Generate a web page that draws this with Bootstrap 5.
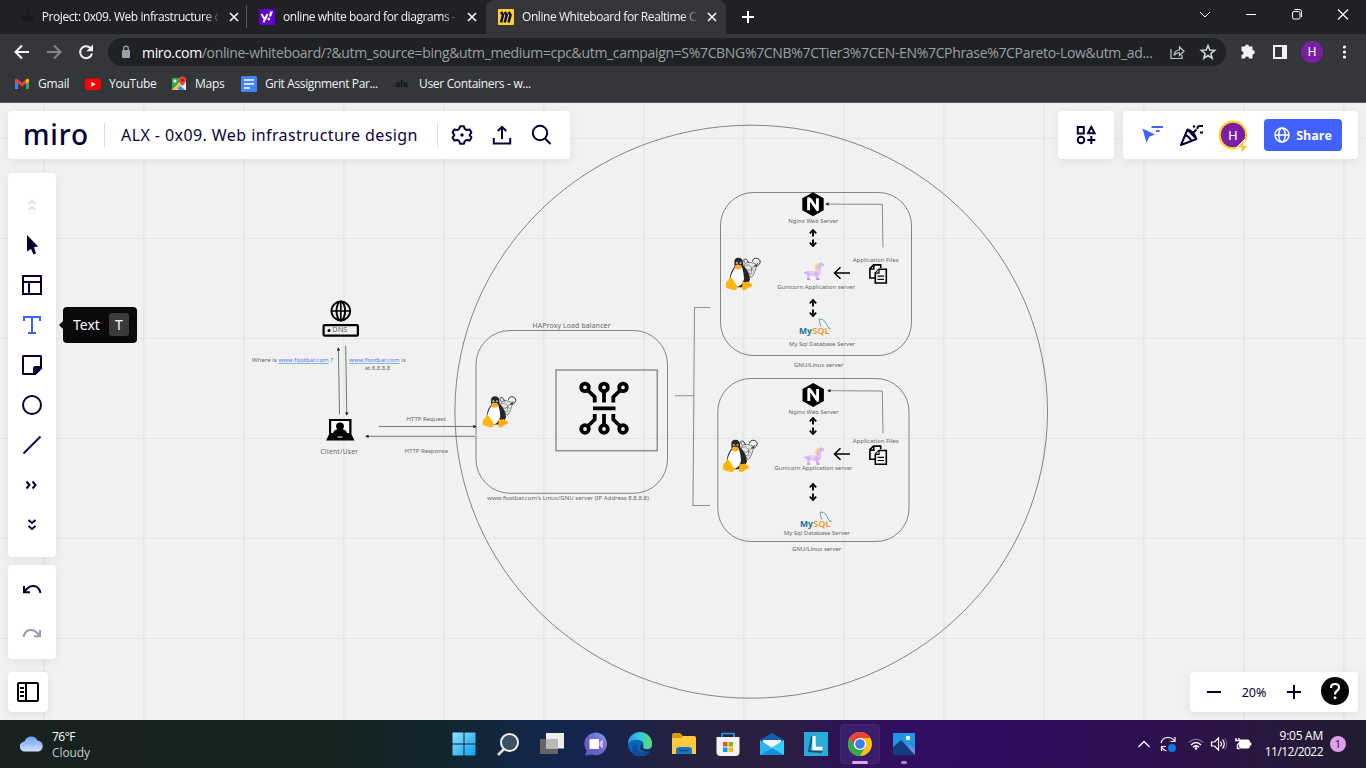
<!DOCTYPE html>
<html lang="en">
<head>
<meta charset="utf-8">
<meta name="viewport" content="width=device-width, initial-scale=1">
<title>Online Whiteboard for Realtime Collaboration</title>
<link href="https://cdn.jsdelivr.net/npm/bootstrap@5.3.0/dist/css/bootstrap.min.css" rel="stylesheet">
<style>
:root{--ink:#050038;--miro:#4262ff}
body{font-family:"Open Sans","Noto Sans",sans-serif;width:1366px;height:768px;overflow:hidden;background:#f1f1f1}
svg{display:block;flex:none}
.tabstrip{height:34px;background:#202124;padding-left:8px}
.btab{width:239px;padding:0 6px 0 12px;font-size:12px;letter-spacing:-.43px;color:#f1f3f4;height:34px;position:relative}
.btab .ttl{margin:0 8px;width:176px;-webkit-mask-image:linear-gradient(90deg,#000 92%,rgba(0,0,0,.2))}
.btab.on{background:#35363a;border-radius:8px 8px 0 0;width:240px;padding-right:8px}
.btab.line{border-right:1px solid transparent;border-image:linear-gradient(transparent 7px,#5a5b5f 7px,#5a5b5f 27px,transparent 27px) 1}
.wbtn{width:46px;height:28px}
.urlrow{height:36px;background:#35363a}
.nbtn{width:32px}
.omni{width:1118px;height:28px;border-radius:14px;background:#202124;font-size:14px;color:#9aa0a6;padding:0 9px 0 10px}
.url{letter-spacing:-.33px}
.marks{height:33px;background:#35363a;border-bottom:1px solid #5b5c60;font-size:12px;letter-spacing:-.25px;color:#f1f3f4;padding:0 14px 5px}
.alx{font:800 9px "Noto Sans",sans-serif;color:#16171a;width:16px;letter-spacing:-.3px}
.board{height:617px;background:#f1f1f1}
.panel{background:#fff;border-radius:4px;box-shadow:0 2px 10px rgba(5,0,56,.07);color:var(--ink)}
.p-title{left:8px;top:8px;width:562px;height:48px}
.p-apps{left:1058px;top:8px;width:56px;height:48px}
.p-share{left:1123px;top:8px;width:235px;height:48px}
.p-tools{left:8px;top:70px;width:48px;height:384px;padding:12px 0}
.p-undo{left:8px;top:462px;width:48px;height:94px;padding:3px 0}
.p-frames{left:8px;top:569px;width:40px;height:40px}
.p-zoom{left:1190px;top:569px;width:168px;height:40px}
.vline{width:1px;height:24px;background:#dcdce2}
.tool{width:40px;height:40px}
.bname{font:400 16px "Noto Sans",sans-serif;letter-spacing:.42px;width:300px;color:#0b0640}
.btn-go{width:78px;height:32px;background:var(--miro);color:#fff;font:700 12.5px "Open Sans",sans-serif;border-radius:4px;border:0}
.btn-go:hover{background:#2b4bee;color:#fff}
.tip{left:63px;top:204px;width:74px;height:36px;background:#0a0a0a;border-radius:4px;color:#fff;font:14px "Noto Sans",sans-serif}
.tip::before{content:"";position:absolute;left:-4px;top:13px;border:5px solid transparent;border-right-color:#0a0a0a;border-left:0}
.keycap{width:20px;height:23px;background:#3b3b3b;border-radius:3px}
.taskbar{height:48px;background:linear-gradient(90deg,#182220 0,#15221f 24%,#12262d 32%,#13264b 40%,#15234e 43%,#25213f 50%,#2b1f41 57%,#2c1552 61%,#310e63 66%,#2f0c5e 74%,#2e0f50 84%,#291740 92%,#211c2e);color:#fff;font-size:12px;line-height:16px}
.task{width:44px;height:48px;position:relative}
.task.cur::before{content:"";position:absolute;inset:4px 2px;border:1px solid #44266f;background:#3b1e69;border-radius:4px}
.task svg{position:relative}
.runbar{left:14px;bottom:4px;width:16px;height:3px;border-radius:2px;background:#dfa5ec}
.rundot{left:19px;bottom:4px;width:6px;height:3px;border-radius:2px;background:#a78dbd}
.weather{width:442px;padding-left:20px}
.clock{width:60px;letter-spacing:-.55px;white-space:nowrap}
.diagram text{font-family:"Noto Sans",sans-serif;fill:#686868}
</style>
</head>
<body class="d-flex flex-column m-0">
<header>
  <div class="tabstrip d-flex">
    <div class="btab line d-flex align-items-center"><span class="alx" style="margin-left:1px">alx</span><span class="ttl text-nowrap flex-fill">Project: 0x09. Web infrastructure d</span>
      <svg width="16" height="16" viewBox="0 0 16 16"><path d="M4 4l8 8M12 4l-8 8" stroke="#f1f3f4" stroke-width="1.7"/></svg></div>
    <div class="btab d-flex align-items-center"><svg width="16" height="16" viewBox="0 0 16 16"><rect width="16" height="16" fill="#6001d2"/><path d="M2.500 5l3 5M8.500 5l-4 8.300" stroke="#fff" stroke-width="2"/><path d="M11 2.500h3l-2 5h-2z" fill="#fff"/><circle cx="9.800" cy="10" r="1.400" fill="#fff"/></svg><span class="ttl text-nowrap flex-fill">online white board for diagrams -</span>
      <svg width="16" height="16" viewBox="0 0 16 16"><path d="M4 4l8 8M12 4l-8 8" stroke="#f1f3f4" stroke-width="1.7"/></svg></div>
    <div class="btab on d-flex align-items-center"><svg width="16" height="16" viewBox="0 0 16 16"><rect width="16" height="16" rx="1" fill="#ffd02f"/><path d="M3 3l2 3-2 7.500M6.700 3l2 3-2 7.500M10.500 3l2 3-2 7.500" fill="none" stroke="#12104a" stroke-width="2.600"/></svg><span class="ttl text-nowrap flex-fill">Online Whiteboard for Realtime C</span>
      <svg width="16" height="16" viewBox="0 0 16 16"><path d="M4 4l8 8M12 4l-8 8" stroke="#f1f3f4" stroke-width="1.7"/></svg></div>
    <svg width="44" height="34" viewBox="0 0 44 34"><path d="M22 11v12M16 17h12" stroke="#fff" stroke-width="2"/></svg>
    <div class="d-flex ms-auto">
      <svg class="wbtn" viewBox="0 0 46 28"><path d="M18 12l5 5 5-5" fill="none" stroke="#fff"/></svg>
      <svg class="wbtn" viewBox="0 0 46 28"><path d="M18 14.500h10" stroke="#fff"/></svg>
      <svg class="wbtn" viewBox="0 0 46 28"><rect x="18.500" y="11.500" width="7.500" height="7.500" rx="1.500" fill="none" stroke="#fff"/><path d="M20.500 9.500h5q2 0 2 2v5.500" fill="none" stroke="#fff"/></svg>
      <svg class="wbtn" viewBox="0 0 46 28"><path d="M18 9.500l10 10M28 9.500l-10 10" stroke="#fff" stroke-width="1.100"/></svg>
    </div>
  </div>
  <div class="urlrow d-flex align-items-center">
    <div class="d-flex" style="padding:0 6px">
      <svg class="nbtn" height="24" viewBox="0 0 32 24"><path d="M23 12H10M16 5.500L9.500 12l6.500 6.500" fill="none" stroke="#f1f3f4" stroke-width="2"/></svg>
      <svg class="nbtn" height="24" viewBox="0 0 32 24"><path d="M9 12h13M16 5.500l6.500 6.500-6.500 6.500" fill="none" stroke="#85868a" stroke-width="2"/></svg>
      <svg class="nbtn" height="24" viewBox="0 0 32 24"><path d="M20.500 8A6 6 0 1 0 22 13.500" fill="none" stroke="#f1f3f4" stroke-width="2"/><path d="M23 4.500v6.700h-6.700z" fill="#f1f3f4"/></svg>
    </div>
    <div class="omni d-flex align-items-center">
      <svg class="me-2" width="16" height="16" viewBox="0 0 16 16"><rect x="4" y="6" width="8" height="8" rx="1" fill="#9aa0a6"/><path d="M5.700 7V4.500a2.300 2.300 0 0 1 4.600 0V7" fill="none" stroke="#9aa0a6" stroke-width="1.300"/></svg>
      <span class="text-nowrap url"><span class="text-white">miro.com</span>/online-whiteboard/?&amp;utm_source=bing&amp;utm_medium=cpc&amp;utm_campaign=S%7CBNG%7CNB%7CTier3%7CEN-EN%7CPhrase%7CPareto-Low&amp;utm_ad...</span>
      <svg class="ms-auto" width="18" height="18" viewBox="0 0 18 18"><path d="M3 6v9.500h11V12M6 12.500q.5-5.500 5.500-5.500V4l4.500 4.300-4.500 4.200V10Q8 9.500 6 12.500z" fill="none" stroke="#c3c6ca" stroke-width="1.200"/></svg>
      <svg width="18" height="18" viewBox="0 0 18 18" style="margin-left:13px"><path d="M9 2.500l1.800 4.500 4.900.3-3.800 3.100 1.300 4.800L9 12.500l-4.200 2.700 1.300-4.800-3.800-3.100 4.900-.3z" fill="none" stroke="#d3d6d9" stroke-width="1.500"/></svg>
    </div>
    <div class="d-flex align-items-center" style="padding-left:6px">
      <svg class="nbtn" height="24" viewBox="0 0 32 24"><path d="M9.500 6.500H13a2 2 0 1 1 4 0h3.500V10a2.200 2.200 0 1 1 0 4.500v4H17a2 2 0 0 0-4 0H9.500V15a2 2 0 1 0 0-4z" fill="#f1f3f4"/></svg>
      <svg class="nbtn" height="24" viewBox="0 0 32 24"><path fill-rule="evenodd" d="M9 5h14v14H9zM11 7v10h7V7z" fill="#f1f3f4"/></svg>
      <svg class="nbtn" height="24" viewBox="0 0 32 24"><circle cx="16" cy="12" r="11" fill="#7b1fa2"/><text x="16" y="16.300" text-anchor="middle" font-size="12" fill="#fff" font-family="Roboto">H</text></svg>
      <svg class="nbtn" height="24" viewBox="0 0 32 24"><circle cx="16.500" cy="7" r="1.600" fill="#fff"/><circle cx="16.500" cy="12" r="1.600" fill="#fff"/><circle cx="16.500" cy="17" r="1.600" fill="#fff"/></svg>
    </div>
  </div>
  <div class="marks d-flex align-items-center text-nowrap">
    <div class="d-flex align-items-center gap-2" style="width:71px"><svg width="16" height="16" viewBox="0 0 16 16"><path d="M1 3v10h3V6z" fill="#4285f4"/><path d="M15 3v10h-3V6z" fill="#34a853"/><path d="M1 3.500Q2.500 2 4 3.500L8 6.700l4-3.200v4L8 10.500 4 7.500 1 5.500z" fill="#ea4335"/><path d="M12 3.500q1.500-1.500 3 0v2l-3 2.300z" fill="#fbbc04"/></svg>Gmail</div>
    <div class="d-flex align-items-center gap-2" style="width:86px"><svg width="16" height="16" viewBox="0 0 16 16"><rect y="2.500" width="16" height="11.500" rx="3" fill="#f00"/><path d="M6.300 5.800v5L10.700 8.300z" fill="#fff"/></svg>YouTube</div>
    <div class="d-flex align-items-center gap-2" style="width:70px"><svg width="16" height="16" viewBox="0 0 16 16"><path d="M1 2h12v12H1z" fill="#34a853"/><path d="M1 14L12 3l3 3v8z" fill="#e8eaed"/><path d="M7 8l7 6H8L4 11z" fill="#4285f4"/><path d="M1 14l8-8 2 2-6 6z" fill="#fbc02d"/><circle cx="4" cy="5" r="1.500" fill="#fff"/><path d="M8 4a3.500 3.500 0 0 1 7 0q0 2-3.500 6Q8 6 8 4z" fill="#ea4335"/><circle cx="11.500" cy="4" r="1.200" fill="#811411"/></svg>Maps</div>
    <div class="d-flex align-items-center gap-2" style="width:154px;letter-spacing:-.36px"><svg width="16" height="16" viewBox="0 0 16 16"><rect width="16" height="16" rx="1.500" fill="#4285f4"/><path d="M3 4h10M3 8h10M3 12h6" stroke="#fff" stroke-width="1.700"/></svg>Grit Assignment Par...</div>
    <div class="d-flex align-items-center gap-2" style="letter-spacing:-.32px"><span class="alx">alx</span>User Containers - w...</div>
  </div>
</header>

<main class="board position-relative overflow-hidden">
<svg class="diagram" width="1366" height="617" viewBox="0 103 1366 617">
  <defs>
    <pattern id="grid" x="43" y="38" width="100" height="100" patternUnits="userSpaceOnUse"><path d="M.75 0v100M0 .25h100" stroke="#e7e7e7" stroke-width="1.500"/></pattern>
    <marker id="tipe" viewBox="0 0 4 4" refX="3" refY="2" markerWidth="3.500" markerHeight="3.500" markerUnits="userSpaceOnUse" orient="auto-start-reverse"><path d="M0 0l4 2-4 2z" fill="#222"/></marker>
    <g id="tux">
      <path d="M19.500 6q4-2.500 8-.5 5 1 3 5l-2 6-2.500 3.500-2.500-2-2-5q-4-3-2-7z" fill="#e4e4e4" stroke="#555" stroke-width=".7"/>
      <path d="M19 5Q17 1.500 20 1.500q2 .5 3 4M27 4q.5-4 5-3 4 1.500 2 5.500-2 3-5 2 3-.5 3-3" fill="none" stroke="#333" stroke-width="1"/>
      <path d="M20 8q3-2 5 1t5-2M22 12q1.500 2 3 0t3 1M23 15.500q2 2 4 0M26 10v5" fill="none" stroke="#666" stroke-width=".7"/>
      <path d="M8.800 4.500Q9 .3 13 .3t4.500 4.500l.5 3.500q6 6 6.500 14l-4 7.500H8L4.500 20q0-5 4.500-11z" fill="#262628"/>
      <path d="M9.500 10q4 3.500 7-.5 1.800 6 2 12-2 8-8.700 8-5.500-3-5.100-8 .8-5 4.800-11.500z" fill="#fff"/>
      <ellipse cx="11.300" cy="5.500" rx="1.100" ry="1.300" fill="#aaa"/><ellipse cx="15" cy="5.500" rx="1.100" ry="1.300" fill="#999"/>
      <path d="M9 8.500q3.500-3 7.500 0-1 3.500-3.800 3.500T9 8.500z" fill="#fbb116"/>
      <path d="M4 19.500q3 1 5 5l3 5q0 2.500-3 3.300l-8-2.300q-1.500-1 0-6 .5-1.500 2-1.500z" fill="#ffb412"/>
      <path d="M17 23q1 3 5 1l4.500 3q1 1.500-3 3l-4 2.500q-3 1-3-1.500z" fill="#ffae10"/>
    </g>
    <g id="nginx"><path d="M0-12L10.700-6V6L0 12-10.700 6V-6z"/><path d="M-4.400 6V-5.500Q-3.500-5.500-3-5L4.400 5.500V-6" fill="none" stroke="#fff" stroke-width="2.900" stroke-linejoin="round"/></g>
    <g id="updown"><path d="M0-6.500v5M0 6.500v-5" stroke="#000" stroke-width="1.900"/><path d="M-3.200-4.600L0-8l3.200 3.400M-3.200 4.600L0 8l3.200-3.400" fill="none" stroke="#000" stroke-width="1.800"/></g>
    <g id="uni"><path d="M.5 10.500l5.500-1.500h8.500l.8-6L19 .3l3 2v2l-3 .2-.5 7-2.300 2.500.5 3.700h-2.500l-.8-4-5-.5-1.500 1.800.5 2.700H5l.3-4L3.500 11.500z" fill="#d8b5f2"/><path d="M6 9l4.500 4.500 3.500-4.500zM18 4.500l-3 5.500 3 1.500z" fill="#e6cdf8"/><path d="M14.500 16.500h3v1.500h-3zM5 16.500h3V18H5z" fill="#bf8ce3"/><path d="M16.500 1l-3 1.800-.8 3.400 1.600 1.800 1.700-3.500z" fill="#f7d96b"/></g>
    <g id="files" fill="#f5f5f5" stroke="#000" stroke-width="1.600"><path d="M6 14H.9V4.500L4.500.9h7.200V4M4.800 1v4H1"/><path d="M6.300 9L10 5.300h7.300V19H6.300z"/><path d="M10 5.500v3.700H6.500M8.500 12.200h6.500M8.500 15.300h6.500" stroke-width="1.200"/></g>
    <g id="arrow"><path d="M16.500 6.500H1M7 .7L1 6.500l6 5.800" fill="none" stroke="#000" stroke-width="1.500"/></g>
    <g id="mysql"><text x="0" y="15" font-size="8.500" textLength="13" lengthAdjust="spacingAndGlyphs" style="fill:#1a6f96;font-weight:700">My</text><text x="13.200" y="15" font-size="8.500" textLength="17.500" lengthAdjust="spacingAndGlyphs" style="fill:#ef9526;font-weight:600">SQL</text><path d="M22 8Q20 4 20.200.5 24 .2 26 3l2.500 5 2.800 2-2 .3" fill="none" stroke="#4c9ab3" stroke-width=".9"/></g>
  </defs>
  <rect y="103" width="1366" height="617" fill="url(#grid)"/>
  <g fill="none" stroke="#777" stroke-width=".9">
    <ellipse cx="751.200" cy="411.700" rx="296.300" ry="286.500"/>
    <rect x="476" y="330.500" width="191.500" height="162.800" rx="34"/>
    <rect x="720.500" y="192.500" width="191" height="163" rx="33"/>
    <rect x="717.800" y="378.500" width="191.200" height="163" rx="33"/>
    <rect x="556" y="370" width="101.200" height="80.700" stroke="#8b8b8b" stroke-width="1.400"/>
    <path d="M675 395.800h19.500M710 307.500h-15.500L693 506M693 505.500h17" stroke="#909090" stroke-width="1.100"/>
    <g stroke="#666"><path d="M339.500 414.500L338.400 348" marker-end="url(#tipe)"/><path d="M345.700 345.500L346.800 415" marker-end="url(#tipe)"/><path d="M379 426.500h97" marker-end="url(#tipe)"/><path d="M475 436.300H366" marker-end="url(#tipe)"/></g>
    <path d="M883 247.500L882.300 204.300 826 204.100" marker-end="url(#tipe)" stroke="#808080"/><path d="M883 433.500L882.300 391 828 390.700" marker-end="url(#tipe)" stroke="#808080"/>
  </g>
  <g fill="none" stroke="#000" stroke-width="2">
    <circle cx="340.800" cy="311" r="9.400"/><ellipse cx="340.800" cy="311" rx="4.300" ry="9.400"/><path d="M331.500 311h18.600M340.800 302v18" stroke-width="1.700"/>
    <rect x="323.600" y="325.100" width="34.300" height="10.600" rx="1" stroke-width="2.200"/>
  </g>
  <circle cx="329" cy="330.600" r="1.500"/>
  <text x="332.300" y="332.300" font-size="6.500" textLength="15" lengthAdjust="spacingAndGlyphs">DNS</text>
  <path d="M329 419h22.500v15.500l3 6h-28.500l3-6z"/><path d="M331.200 421h18v12h-18z" fill="#fff"/><path d="M333 434q0-4 4-4.500l-1-3q0-4 4-4t4 4l-1 3q4 .5 4 4.500z"/><path d="M337.500 437h5" stroke="#fff"/>
  <g font-size="6">
    <text x="320.500" y="453.700" font-size="6.700" textLength="37.500">Client/User</text>
    <text x="252" y="362" textLength="81">Where is <tspan style="fill:#3f7fea;text-decoration:underline">www.footbar.com</tspan> ?</text>
    <text x="349.300" y="362" textLength="56.500"><tspan style="fill:#3f7fea;text-decoration:underline">www.footbar.com</tspan> is</text>
    <text x="364.700" y="370" textLength="25.500">at 8.8.8.8</text>
    <text x="406.600" y="421.200" textLength="39.300">HTTP Request</text>
    <text x="404.600" y="453.200" textLength="43.500">HTTP Response</text>
    <text x="532.500" y="327.800" font-size="6.900" textLength="78">HAProxy Load balancer</text>
    <text x="487.300" y="500.200" textLength="161.500">www.footbar.com's Linux/GNU server (IP Address 8.8.8.8)</text>
    <text x="788.300" y="223" textLength="50">Nginx Web Server</text>
    <text x="852.700" y="262" textLength="45.800">Application Files</text>
    <text x="777.200" y="289.200" textLength="78">Gunicorn Application server</text>
    <text x="789" y="346" textLength="66">My Sql Database Server</text>
    <text x="794" y="367" textLength="49.300">GNU/Linux server</text>
    <text x="788.500" y="414" textLength="50">Nginx Web Server</text>
    <text x="852.700" y="443.200" textLength="45.800">Application Files</text>
    <text x="774.500" y="470.200" textLength="78">Gunicorn Application server</text>
    <text x="783.800" y="535" textLength="66">My Sql Database Server</text>
    <text x="792" y="551" textLength="49.300">GNU/Linux server</text>
  </g>
  <g fill="none" stroke="#000" stroke-width="3.800">
    <circle cx="585" cy="387.400" r="3.800"/><circle cx="604" cy="387.400" r="3.800"/><circle cx="623" cy="387.400" r="3.800"/>
    <circle cx="585" cy="429" r="3.800"/><circle cx="604" cy="429" r="3.800"/><circle cx="623" cy="429" r="3.800"/>
    <path d="M604 391v11.500M604 425.500V414M588 390.500l6.700 6.500v5.500M620 390.500l-6.700 6.500v5.500M588 426l6.700-6.500V414M620 426l-6.700-6.500V414M593 408.300h22.500"/>
  </g>
  <use href="#tux" transform="translate(482.500 396) scale(.96)"/><use href="#tux" x="725.500" y="257.500"/><use href="#tux" x="722.500" y="439.500"/>
  <use href="#nginx" x="813" y="204.200"/><use href="#nginx" x="813.200" y="395"/>
  <use href="#updown" x="813" y="238"/><use href="#updown" x="813" y="308"/><use href="#updown" x="813" y="426"/><use href="#updown" x="813" y="492"/>
  <use href="#uni" x="802" y="262"/><use href="#uni" x="802.200" y="446.700"/>
  <use href="#arrow" x="833.500" y="266.500"/><use href="#arrow" x="833.500" y="447.500"/>
  <use href="#files" x="869" y="264"/><use href="#files" x="869" y="445.200"/>
  <use href="#mysql" x="799" y="318.500"/><use href="#mysql" x="800" y="511.500"/>
</svg>

<div class="panel p-title position-absolute d-flex align-items-center">
  <svg width="96" height="48" viewBox="8 111 96 48"><text x="23" y="145" font-family="Noto Sans" font-weight="500" font-size="28" fill="#050038" textLength="65" lengthAdjust="spacing">miro</text></svg>
  <span class="vline"></span>
  <span class="bname text-nowrap" style="margin:0 16px">ALX - 0x09. Web infrastructure design</span>
  <span class="vline"></span>
  <svg class="tool" style="margin-left:4px" viewBox="-20 -20 40 40"><path d="M-1.800-8.800h3.600l1 2.700 2 1.200 2.900-.5 1.700 3-1.900 2.400 1.900 2.400-1.700 3-2.900-.5-2 1.200-1 2.700h-3.600l-1-2.700-2-1.200-2.900.5-1.700-3L-7.500 0l-1.900-2.400 1.700-3 2.900.5 2-1.200z" fill="none" stroke="#050038" stroke-width="2" stroke-linejoin="round"/><circle r="1.700" fill="#050038"/></svg>
  <svg class="tool" viewBox="-20 -20 40 40"><path d="M-8.200 3v5.500H8.200V3M0 4V-8M-4.200-4L0-8.200 4.200-4" fill="none" stroke="#050038" stroke-width="2"/></svg>
  <svg class="tool" viewBox="-20 -20 40 40"><circle cx="-2" cy="-2" r="7.200" fill="none" stroke="#050038" stroke-width="2"/><path d="M3 3.500L8.500 9" stroke="#050038" stroke-width="2"/></svg>
</div>

<div class="panel p-apps position-absolute d-flex align-items-center justify-content-center">
  <svg class="tool" viewBox="-20 -20 40 40"><g fill="none" stroke="#050038" stroke-width="2"><rect x="-8.200" y="-8" width="6" height="6.500"/><circle cx="-5" cy="5" r="3.300"/><path d="M2 -1.800L5.300-8 8.600-1.800zM5.300 1v8M1.300 5h8"/></g></svg>
</div>

<div class="panel p-share position-absolute d-flex align-items-center">
  <svg class="tool" style="margin-left:10px" viewBox="-20 -20 40 40"><path d="M-10.500-6.500L2-.5-3.800 1.800-6.500 8z" fill="#4262ff"/><path d="M-1.500-8H10M3-4h3.500" stroke="#4262ff" stroke-width="1.800"/></svg>
  <svg class="tool" viewBox="-20 -20 40 40" style="margin-left:-1px"><g fill="none" stroke="#050038" stroke-width="2" stroke-linejoin="round"><path d="M-4.500-5.500L-11 10 4.500 4zM-4.500-5.500q6 1.500 9 9.500M-7 0q4 1 6.500 6M0-1L4.500-5.500M5.500-6q-.5-3 2.500-3h3M8-2.500h3"/></g><circle cx="2" cy="-8.500" r="1.200" fill="#050038"/></svg>
  <svg width="40" height="40" viewBox="-20 -20 40 40" style="margin-left:1px"><circle r="13.300" fill="#7b1fa2" stroke="#ffd02f" stroke-width="2.200"/><text y="4.500" text-anchor="middle" font-family="Roboto" font-size="13" fill="#fff">H</text><path d="M11.500 4.500L3.500 12.800h5L7 19.500l8.500-9h-5z" fill="#ffc52a" stroke="#fff" stroke-width="1"/></svg>
  <button class="btn-go btn p-0 d-flex align-items-center justify-content-center" style="margin-left:11px;gap:6px"><svg width="16" height="16" viewBox="-8 -8 16 16"><g fill="none" stroke="#fff" stroke-width="1.500"><circle r="7"/><ellipse rx="3.200" ry="7"/><path d="M-7 0H7"/></g></svg>Share</button>
</div>

<nav class="panel p-tools position-absolute d-flex flex-column align-items-center">
  <svg class="tool" viewBox="-20 -20 40 40"><path d="M-3.500-1L0-4l3.500 3M-3.500 5L0 2l3.500 3" fill="none" stroke="#e1e0e7" stroke-width="2"/></svg>
  <svg class="tool" viewBox="-20 -20 40 40"><path d="M-5-10L6.200 1.500 2 2.300 4 8.500 1.500 9.500-1 4-5 6.500z" fill="#050038"/></svg>
  <svg class="tool" viewBox="-20 -20 40 40"><path d="M-9-9H9V9H-9zM-9-3H9M-3-3V9" fill="none" stroke="#050038" stroke-width="2"/></svg>
  <svg class="tool" viewBox="-20 -20 40 40"><path d="M-8-4v-4H8v4M0-8V8M-4 8h8" fill="none" stroke="#4262ff" stroke-width="2"/></svg>
  <svg class="tool" viewBox="-20 -20 40 40"><path d="M-9-9H9V3L3 9H-9z" fill="none" stroke="#050038" stroke-width="2" stroke-linejoin="round"/><path d="M1 10V3.500Q1 1 3.500 1H10v2.500L3.500 10z" fill="#050038"/></svg>
  <svg class="tool" viewBox="-20 -20 40 40"><circle r="9" fill="none" stroke="#050038" stroke-width="2"/></svg>
  <svg class="tool" viewBox="-20 -20 40 40"><path d="M-8.500 8.500l17-17" stroke="#050038" stroke-width="2"/></svg>
  <svg class="tool" viewBox="-20 -20 40 40"><path d="M-5.500-3.500L-2.500 0l-3 3.500M.5-3.500L3.500 0 .5 3.500" fill="none" stroke="#050038" stroke-width="2"/></svg>
  <svg class="tool" viewBox="-20 -20 40 40"><path d="M-3.500-5L0-2l3.500-3M-3.500 1L0 4l3.500-3" fill="none" stroke="#050038" stroke-width="2"/></svg>
</nav>
<div class="tip position-absolute d-flex align-items-center justify-content-between" style="padding:0 8px 2px 10px">Text <span class="keycap d-flex align-items-center justify-content-center">T</span></div>

<div class="panel p-undo position-absolute d-flex flex-column align-items-center">
  <svg width="40" height="44" viewBox="-20 -22 40 44"><path d="M-7.500 1.500Q-3-4.500 2-4T8.500 3M-8-4v6.200H-2" fill="none" stroke="#050038" stroke-width="2"/></svg>
  <svg width="40" height="44" viewBox="-20 -22 40 44"><path d="M7.500 1.500Q3-4.500-2-4T-8.500 3M8-4v6.200H2" fill="none" stroke="#9b99af" stroke-width="2"/></svg>
</div>
<div class="panel p-frames position-absolute d-flex align-items-center justify-content-center">
  <svg width="24" height="24" viewBox="0 0 24 24"><g fill="none" stroke="#000" stroke-width="2"><rect x="2" y="3" width="20" height="18" rx="1"/><path d="M10 3v18M4 8h4M4 12h4M4 16h4"/></g></svg>
</div>
<div class="panel p-zoom position-absolute d-flex align-items-center">
  <svg class="tool" style="margin-left:4px" viewBox="-20 -20 40 40"><path d="M-7 0h14" stroke="#050038" stroke-width="2"/></svg>
  <span class="text-center" style="font:12.500px 'Noto Sans';width:40px">20%</span>
  <svg class="tool" viewBox="-20 -20 40 40"><path d="M-7 0H7M0-7V7" stroke="#050038" stroke-width="2"/></svg>
  <svg width="40" height="40" viewBox="-20 -20 40 40"><g transform="translate(1 -1)"><circle r="14" fill="#050505"/><path d="M-4-3q0-4 4-4t4 3.500q0 2-2 3.200T0 3.500" fill="none" stroke="#fff" stroke-width="2.200"/><circle cy="6.700" r="1.500" fill="#fff"/></g></svg>
</div>
</main>

<footer class="taskbar d-flex align-items-center">
  <div class="weather d-flex align-items-center gap-2">
    <svg width="24" height="24" viewBox="0 0 24 24"><defs><linearGradient id="cl" x2="0" y2="1"><stop stop-color="#6ba0f0"/><stop offset="1" stop-color="#d3e3fc"/></linearGradient></defs><path d="M5 19.500a5 5 0 0 1-.5-10 7 7 0 0 1 13-1 5.600 5.600 0 0 1 1 11z" fill="url(#cl)"/><path d="M3 14q5-6 10-1 4-4 9-1" fill="none" stroke="#8eb5f4" stroke-width="1.500" opacity=".6"/></svg>
    <div style="padding-top:1px"><span style="letter-spacing:-.5px">76°F</span><br><span style="color:#c4cac9;letter-spacing:-.1px">Cloudy</span></div>
  </div>
  <div class="task d-flex align-items-center justify-content-center"><svg width="24" height="24" viewBox="0 0 24 24"><defs><linearGradient id="wn" x2="1" y2="1"><stop stop-color="#8ce3fb"/><stop offset="1" stop-color="#109df0"/></linearGradient></defs><path d="M.5.500h11v11H.5zM12.500.500h11v11h-11zM.5 12.500h11v11H.5zM12.500 12.500h11v11h-11z" fill="url(#wn)"/></svg></div>
  <div class="task d-flex align-items-center justify-content-center"><svg width="24" height="24" viewBox="0 0 24 24"><path d="M8 17l-6 6" stroke="#ddd" stroke-width="2.500"/><circle cx="13.500" cy="10.500" r="8.500" fill="#3c4f63" stroke="#eee" stroke-width="2"/></svg></div>
  <div class="task d-flex align-items-center justify-content-center"><svg width="24" height="24" viewBox="0 0 24 24"><path d="M0 7h18v15H0z" fill="#656565"/><path d="M6 1h18v15.500H6z" fill="#ededed"/><path d="M6 7h12v9.500H6z" fill="#b8b8b8"/></svg></div>
  <div class="task d-flex align-items-center justify-content-center"><svg width="24" height="24" viewBox="0 0 24 24"><defs><linearGradient id="ct" x1="1" x2="0" y2="1"><stop stop-color="#7d9cf0"/><stop offset=".5" stop-color="#6b68cd"/><stop offset="1" stop-color="#5a55ba"/></linearGradient></defs><path d="M1 23.500l1.500-5A11.300 11.300 0 1 1 8 22.600z" fill="url(#ct)"/><rect x="5.500" y="7" width="9.500" height="10" rx="1" fill="#fff"/><path d="M15.500 10l3.500-2.500v9L15.500 14z" fill="#eaf"/></svg></div>
  <div class="task d-flex align-items-center justify-content-center"><svg width="24" height="24" viewBox="0 0 24 24"><defs><linearGradient id="ed" x2="1"><stop stop-color="#279be7"/><stop offset=".5" stop-color="#35c6dd"/><stop offset="1" stop-color="#63dc64"/></linearGradient></defs><circle cx="12" cy="12" r="12" fill="#0c62b5"/><path d="M0 12a12 12 0 0 1 24 0q0 5-5 5-4 0-4-2.500 1-1 .5-3-1-3.500-5-3.500Q4 7 0 12z" fill="url(#ed)"/><path d="M9 12q-1 8 6 8 4 1 7.500-2l-1.500 3A12 12 0 0 1 5 22q-3-7 4-10z" fill="#0b4e9f"/><path d="M14.500 12q1 1.500 0 3 1 3 5 2.500l4-1-2 3q-5 1-8-1.500t1-6z" fill="#1a2649"/></svg></div>
  <div class="task d-flex align-items-center justify-content-center"><svg width="24" height="24" viewBox="0 0 24 24"><path d="M0 3q0-2 2-2h6l3 3v5H0z" fill="#d99a0a"/><path d="M0 6h9l2-2h11q2 0 2 2v16H0z" fill="#ffca40"/><path d="M4 22v-4q0-3 3-3h10q3 0 3 3v4z" fill="#1577bf"/><path d="M7 18.500h10" stroke="#0c4f8e" stroke-width="1.500"/></svg></div>
  <div class="task d-flex align-items-center justify-content-center"><svg width="24" height="24" viewBox="0 0 24 24"><path d="M6 6V2.200q0-.7.700-.7h10.600q.7 0 .7.700V6" fill="none" stroke="#19a4ec" stroke-width="1.700"/><path d="M.5 5h23v15q0 4-4 4h-15q-4 0-4-4z" fill="#f2f2f2"/><path d="M7 10h4.500v4.500H7z" fill="#f35325"/><path d="M12.500 10H17v4.500h-4.500z" fill="#81bc06"/><path d="M7 15.500h4.500V20H7z" fill="#05a6f0"/><path d="M12.500 15.500H17V20h-4.500z" fill="#ffba08"/></svg></div>
  <div class="task d-flex align-items-center justify-content-center"><svg width="24" height="24" viewBox="0 0 24 24"><path d="M0 8L12 1l12 7v5H0z" fill="#0b60af"/><path d="M3 8h18v9H3z" fill="#f7f7f7"/><path d="M0 8l12 8L24 8v15H0z" fill="#2bb4ee"/><path d="M0 23L24 8v15z" fill="#38cdf7"/><path d="M0 23l12-7 12 7z" fill="#178edb"/></svg></div>
  <div class="task d-flex align-items-center justify-content-center"><svg width="24" height="24" viewBox="0 0 24 24"><path d="M0 0h24v24H0z" fill="#27abd8"/><path d="M8 4L5 19l13 1" fill="none" stroke="#12527f" stroke-width="2"/><path d="M10 4v12.500h8.500" fill="none" stroke="#fff" stroke-width="3.300"/></svg></div>
  <div class="task cur d-flex align-items-center justify-content-center"><svg width="24" height="24" viewBox="-12 -12 24 24"><circle r="12" fill="#fbc116"/><path d="M-10.400-6A12 12 0 0 1 10.400-6H0L-5.200 3z" fill="#ea4335"/><path d="M-10.400-6A12 12 0 0 0 0 12L5.200 3H-5.200z" fill="#34a853"/><circle r="6.100" fill="#fff"/><circle r="4.800" fill="#3b7de9"/></svg><span class="runbar position-absolute"></span></div>
  <div class="task d-flex align-items-center justify-content-center"><svg width="24" height="24" viewBox="0 0 24 24"><path d="M1 1h22v22H1z" fill="#2196e5"/><path d="M15 16l3-3 5 5v5h-8z" fill="#7488dc"/><path d="M1 15l8-7 14 15H1z" fill="#123e7f"/><circle cx="16" cy="6" r="2.200" fill="#fff"/></svg><span class="rundot position-absolute"></span></div>
  <div class="d-flex align-items-center ms-auto" style="padding-right:20px">
    <svg width="24" height="24" viewBox="-12 -12 24 24"><path d="M-5.500 3L0-2.500 5.500 3" fill="none" stroke="#fff" stroke-width="1.300"/></svg>
    <svg width="24" height="24" viewBox="-12 -12 24 24"><path d="M-7-1Q-5.500-6.500 0-6.500 4-6.500 6.500-3M7-7v4.500H2.500M-6.500 7V2.500H-2M-6.500 3q1.500 3 5 4" fill="none" stroke="#fff" stroke-width="1.200"/><circle cx="4" cy="4" r="4" fill="#0a7ae0"/></svg>
    <svg width="29" height="24" viewBox="-16 -12 29 24"><path d="M-7-1.500Q0-8 7-1.500" fill="none" stroke="#74618a" stroke-width="1.400"/><path d="M-5 1Q0-4 5 1M-3 3.300Q0 .5 3 3.300" fill="none" stroke="#fff" stroke-width="1.500"/><circle cy="4.500" r="1.300" fill="#fff"/></svg>
    <svg width="22" height="24" viewBox="-9 -12 22 24"><path d="M-6.500-2h3l4-4V6l-4-4h-3z" fill="none" stroke="#fff" stroke-width="1.200"/><path d="M2.500-2.500q2 2.500 0 5M4.500-4.500q3.500 4.500 0 9" fill="none" stroke="#fff" stroke-width="1.200"/><path d="M6.500-6q4.500 6 0 12" fill="none" stroke="#735a8b"/></svg>
    <svg width="32" height="24" viewBox="-12 -12 32 24"><rect x="-3.500" y="-4" width="10" height="8" rx="1.500" fill="#fff" stroke="#fff"/><path d="M7.500-1.500v3" stroke="#fff" stroke-width="1.700"/><path d="M-7-6v2.500M-4-6v2.500M-8-3.500h5v2l-2.500 2V4.500h2" fill="none" stroke="#fff" stroke-width="1.300"/></svg>
    <div class="clock d-flex flex-column align-items-end"><span style="letter-spacing:-.25px">9:05 AM</span><span>11/12/2022</span></div>
    <svg style="margin-left:7px" width="16" height="16" viewBox="0 0 16 16"><circle cx="8" cy="8" r="8" fill="#dd9fe9"/><text x="8" y="12" font-size="11" text-anchor="middle" fill="#321045" font-family="Open Sans">1</text></svg>
  </div>
</footer>
<script src="https://cdn.jsdelivr.net/npm/bootstrap@5.3.0/dist/js/bootstrap.bundle.min.js"></script>
</body>
</html>
